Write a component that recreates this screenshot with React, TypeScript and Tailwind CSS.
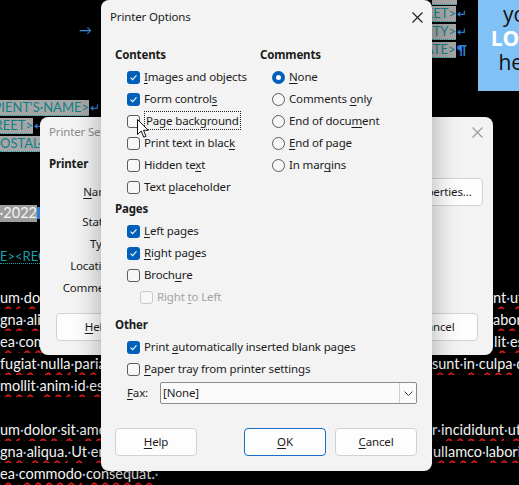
import React from "react";

function Words({ t }: { t: string }) {
  const parts = t.split("·");
  return (
    <>
      {parts.map((p, i) => (
        <span key={i}>
          {i > 0 && <span className="text-[#8fb8e6]">·</span>}
          {p && (
            <span className="underline decoration-wavy decoration-[#d01818] decoration-[2px] underline-offset-[3px]">
              {p}
            </span>
          )}
        </span>
      ))}
    </>
  );
}

const lorem: { left: string; right: string; pr: string }[] = [
  { left: "um·dolor·sit·amet,·consectetur", right: "nt·ut·labore", pr: "pl-[61px]" },
  { left: "gna·aliqua.·Ut·enim·ad·minim", right: "abore·nisi", pr: "pl-[61px]" },
  { left: "ea·commodo·consequat.·Duis", right: "lit·esse", pr: "pl-[62px]" },
  { left: "fugiat·nulla·pariatur.·Excepteur", right: "sunt·in·culpa·qui", pr: "pl-0" },
  { left: "mollit·anim·id·est·laborum.", right: "", pr: "pl-0" },
  { left: "", right: "", pr: "pl-0" },
  { left: "um·dolor·sit·amet,·consectetur", right: "r·incididunt·ut·labore", pr: "pl-0" },
  { left: "gna·aliqua.·Ut·enim·ad·minim", right: "ullamco·laboris", pr: "pl-[1px]" },
  { left: "ea·commodo·consequat.·", right: "", pr: "pl-0" },
];

function Field({ text, w, align = "end" }: { text: string; w: string; align?: "end" | "start" }) {
  return (
    <span
      className={`${w} h-[16px] flex items-center overflow-hidden whitespace-nowrap bg-[#a6a6a6] text-[#127f88] border-b border-dotted border-[#1a9aa3] text-[13px] ${
        align === "end" ? "justify-end" : "justify-start"
      }`}
    >
      {text}
    </span>
  );
}

function Document() {
  return (
    <div className="flex flex-col font-['Lato',sans-serif] text-[14.5px] text-[#f4f4f4] leading-none">
      <div className="grid grid-cols-[432px_1fr] h-[287px]">
        {/* left column */}
        <div className="flex flex-col">
          <div className="mt-[19px] h-[22px] pl-[79px] flex items-center text-[#3b8fe0] text-[13px]">→</div>
          <div className="mt-[58px] flex flex-col">
            <div className="h-[18px] flex items-center">
              <Field text="RECIPIENT'S·NAME>" w="w-[89px]" />
              <span className="text-[#3b8fe0] text-[12px] ml-[1px]">↵</span>
            </div>
            <div className="h-[18px] flex items-center">
              <Field text="STREET>" w="w-[33px]" />
              <span className="text-[#3b8fe0] text-[12px] ml-[1px]">↵</span>
            </div>
            <div className="h-[18px] flex items-center">
              <Field text="OSTAL·CODE>" w="w-[80px]" align="start" />
            </div>
          </div>
          <div className="mt-[51px] h-[18px] flex items-center">
            <span className="w-[37px] h-[17px] flex items-center justify-end overflow-hidden whitespace-nowrap bg-[#9d9d9d] text-[#f4f4f4]">
              r·2022
            </span>
            <span className="w-[3px] h-[12px] bg-[#2f7fd8]" />
          </div>
          <div className="mt-[26px] h-[18px] flex items-center">
            <span className="text-[#17a0a8] text-[13px] border-b border-dotted border-[#17a0a8] whitespace-nowrap">
              E&gt;&lt;RECIPIENT'S·NAME&gt;
            </span>
          </div>
        </div>
        {/* right column */}
        <div className="flex items-start">
          <div className="w-[35px] flex flex-col">
            <div className="h-[5px] w-[25px] bg-[#a6a6a6] border-b border-dotted border-[#1a9aa3]" />
            <div className="h-[18px] flex items-center">
              <Field text="STREET>" w="w-[25px]" />
              <span className="text-[#3b8fe0] text-[12px] ml-[1px]">↵</span>
            </div>
            <div className="h-[18px] flex items-center">
              <Field text="CITY>" w="w-[25px]" />
              <span className="text-[#3b8fe0] text-[12px] ml-[1px]">↵</span>
            </div>
            <div className="h-[18px] flex items-center">
              <Field text="STATE>" w="w-[25px]" />
              <span className="text-[#2f7fe0] text-[14px] font-bold ml-[1px]">¶</span>
            </div>
          </div>
          <div className="ml-[11px] w-[86px] h-[91px] shrink-0 bg-[#80c2f6] flex flex-col items-center pt-[2px] font-['Open_Sans',sans-serif] text-[21px] leading-[24px] text-[#111]">
            <span>you</span>
            <span className="font-bold text-white">LOGO</span>
            <span>here</span>
          </div>
        </div>
      </div>
      {lorem.map((l, i) => (
        <div key={i} className="grid grid-cols-[432px_1fr] h-[22px]">
          <div className="flex items-center overflow-hidden whitespace-nowrap">
            <Words t={l.left} />
          </div>
          <div className={`flex items-center overflow-hidden whitespace-nowrap ${l.pr}`}>
            <Words t={l.right} />
          </div>
        </div>
      ))}
    </div>
  );
}

function CloseX({ color }: { color: string }) {
  return (
    <svg width="11" height="11" viewBox="0 0 11 11">
      <path d="M0.5 0.5 L10.5 10.5 M10.5 0.5 L0.5 10.5" stroke={color} strokeWidth="1.1" fill="none" />
    </svg>
  );
}

function Box({ checked, disabled }: { checked?: boolean; disabled?: boolean }) {
  if (checked)
    return (
      <span className="w-[13px] h-[13px] shrink-0 rounded-[3px] bg-[#005fb8] flex items-center justify-center">
        <svg width="9" height="9" viewBox="0 0 9 9">
          <path d="M1.6 4.7 L3.6 6.6 L7.5 2.4" stroke="white" strokeWidth="1.1" fill="none" />
        </svg>
      </span>
    );
  return (
    <span
      className={`w-[13px] h-[13px] shrink-0 rounded-[3px] border bg-[#f7f7f7] ${
        disabled ? "border-[#c9c9c9]" : "border-[#5c5c5c]"
      }`}
    />
  );
}

function Radio({ on }: { on?: boolean }) {
  if (on)
    return (
      <span className="w-[13px] h-[13px] shrink-0 rounded-full bg-[#005fb8] flex items-center justify-center">
        <span className="w-[5px] h-[5px] rounded-full bg-white" />
      </span>
    );
  return <span className="w-[13px] h-[13px] shrink-0 rounded-full border border-[#5c5c5c] bg-[#f7f7f7]" />;
}

function U({ children }: { children: React.ReactNode }) {
  return <span className="underline underline-offset-[2px]">{children}</span>;
}

function Heading({ children }: { children: React.ReactNode }) {
  return <div className="h-[22px] flex items-center font-bold">{children}</div>;
}

function CheckRow({
  checked,
  disabled,
  indent = "pl-[12px]",
  children,
}: {
  checked?: boolean;
  disabled?: boolean;
  indent?: string;
  children: React.ReactNode;
}) {
  return (
    <div className={`h-[22px] flex items-center gap-[4px] ${indent} ${disabled ? "text-[#a2a2a2]" : ""}`}>
      <Box checked={checked} disabled={disabled} />
      <span className="whitespace-nowrap">{children}</span>
    </div>
  );
}

function RadioRow({ on, children }: { on?: boolean; children: React.ReactNode }) {
  return (
    <div className="h-[22px] flex items-center gap-[4px] pl-[12px]">
      <Radio on={on} />
      <span className="whitespace-nowrap">{children}</span>
    </div>
  );
}

function Btn({ children, primary, w = "w-[82px]" }: { children: React.ReactNode; primary?: boolean; w?: string }) {
  return (
    <div
      className={`${w} h-[28px] rounded-[4px] border bg-[#fdfdfd] flex items-center justify-center ${
        primary ? "border-[#1a6fc4]" : "border-[#d2d2d2]"
      }`}
    >
      {children}
    </div>
  );
}

function PrinterSetup() {
  return (
    <div className="absolute left-[40px] top-[117px] w-[453px] h-[238px] rounded-lg bg-[#f3f3f3] text-[11.5px] tracking-[-0.15px] text-[#1b1b1b] font-['Noto_Sans',sans-serif]">
      <div className="h-[30px] flex items-center justify-between pl-[9px] pr-[10px] text-[#8b8b8b]">
        <span>Printer Setup</span>
        <CloseX color="#9a9a9a" />
      </div>
      <div className="mt-[7px] pl-[9px] h-[20px] flex items-center font-bold">Printer</div>
      <div className="mt-[4px] h-[27px] flex items-center">
        <span className="w-[78px] text-right">
          <U>N</U>ame:
        </span>
        <div className="flex-1 ml-[8px] h-[24px] rounded-[3px] border border-[#c9c9c9] bg-white" />
        <div className="ml-[8px] mr-[10px]">
          <Btn w="w-[86px]">Properties...</Btn>
        </div>
      </div>
      <div className="mt-[6px] flex flex-col">
        <div className="h-[22px] flex items-center">
          <span className="w-[78px] text-right">Status:</span>
        </div>
        <div className="h-[22px] flex items-center">
          <span className="w-[78px] text-right">Type:</span>
        </div>
        <div className="h-[22px] flex items-center">
          <span className="w-[78px] text-right">Location:</span>
        </div>
        <div className="h-[22px] flex items-center">
          <span className="w-[78px] text-right">Comment:</span>
        </div>
      </div>
      <div className="mt-[14px] flex items-center justify-between pl-[16px] pr-[15px]">
        <Btn>
          <U>H</U>elp
        </Btn>
        <div className="flex gap-[9px]">
          <Btn primary>OK</Btn>
          <Btn>Cancel</Btn>
        </div>
      </div>
    </div>
  );
}

function PrinterOptions() {
  return (
    <div className="absolute left-[101px] top-0 w-[331px] h-[471px] rounded-lg bg-[#f3f3f3] shadow-[0_6px_28px_rgba(0,0,0,0.32)] text-[11.5px] tracking-[-0.15px] text-[#1b1b1b] font-['Noto_Sans',sans-serif] leading-none">
      <div className="h-[34px] flex items-center justify-between pl-[9px] pr-[9px]">
        <span>Printer Options</span>
        <CloseX color="#1b1b1b" />
      </div>
      <div className="pl-[14px] pr-[15px] pt-[10px]">
        <div className="flex">
          <div className="w-[145px]">
            <Heading>Contents</Heading>
            <CheckRow checked>
              <U>I</U>mages and objects
            </CheckRow>
            <CheckRow checked>
              Form control<U>s</U>
            </CheckRow>
            <CheckRow>
              <span className="border border-dotted border-[#222] px-[1px] py-[1px]">Page background</span>
            </CheckRow>
            <CheckRow>
              Print text in blac<U>k</U>
            </CheckRow>
            <CheckRow>
              Hidden te<U>x</U>t
            </CheckRow>
            <CheckRow>
              Text <U>p</U>laceholder
            </CheckRow>
            <Heading>Pages</Heading>
            <CheckRow checked>
              <U>L</U>eft pages
            </CheckRow>
            <CheckRow checked>
              <U>R</U>ight pages
            </CheckRow>
            <CheckRow>
              Broch<U>u</U>re
            </CheckRow>
            <CheckRow disabled indent="pl-[25px]">
              Right <U>t</U>o Left
            </CheckRow>
          </div>
          <div>
            <Heading>Comments</Heading>
            <RadioRow on>
              <U>N</U>one
            </RadioRow>
            <RadioRow>
              Comments <U>o</U>nly
            </RadioRow>
            <RadioRow>
              End of docu<U>m</U>ent
            </RadioRow>
            <RadioRow>
              <U>E</U>nd of page
            </RadioRow>
            <RadioRow>
              In mar<U>g</U>ins
            </RadioRow>
          </div>
        </div>
        <div className="mt-[6px]">
          <Heading>Other</Heading>
          <CheckRow checked>
            Print <U>a</U>utomatically inserted blank pages
          </CheckRow>
          <CheckRow>
            <U>P</U>aper tray from printer settings
          </CheckRow>
          <div className="mt-[2px] h-[22px] flex items-center pl-[12px]">
            <span className="w-[33px]">
              <U>F</U>ax:
            </span>
            <div className="flex-1 h-[22px] rounded-[2px] border border-[#8c8c8c] bg-[#fbfbfb] flex items-center">
              <span className="flex-1 pl-[2px]">[None]</span>
              <span className="w-[17px] h-[20px] border-l border-[#cfcfcf] flex items-center justify-center">
                <svg width="9" height="5" viewBox="0 0 9 5">
                  <path d="M0.5 0.5 L4.5 4.5 L8.5 0.5" stroke="#444" strokeWidth="1" fill="none" />
                </svg>
              </span>
            </div>
          </div>
        </div>
        <div className="mt-[24px] flex items-center justify-between">
          <Btn>
            <U>H</U>elp
          </Btn>
          <div className="flex gap-[9px]">
            <Btn primary>
              <U>O</U>K
            </Btn>
            <Btn>
              <U>C</U>ancel
            </Btn>
          </div>
        </div>
      </div>
    </div>
  );
}

export default function App() {
  return (
    <div className="relative w-[519px] h-[485px] overflow-hidden bg-black">
      <Document />
      <PrinterSetup />
      <PrinterOptions />
      {/* mouse pointer */}
      <svg className="absolute left-[137px] top-[119px]" width="13" height="20" viewBox="0 0 13 20">
        <path d="M0.5 0.5 L0.5 15.5 L4.2 12 L6.8 18.2 L9 17.3 L6.5 11.3 L11.3 11.3 Z" fill="white" stroke="#111" strokeWidth="1" />
      </svg>
    </div>
  );
}
